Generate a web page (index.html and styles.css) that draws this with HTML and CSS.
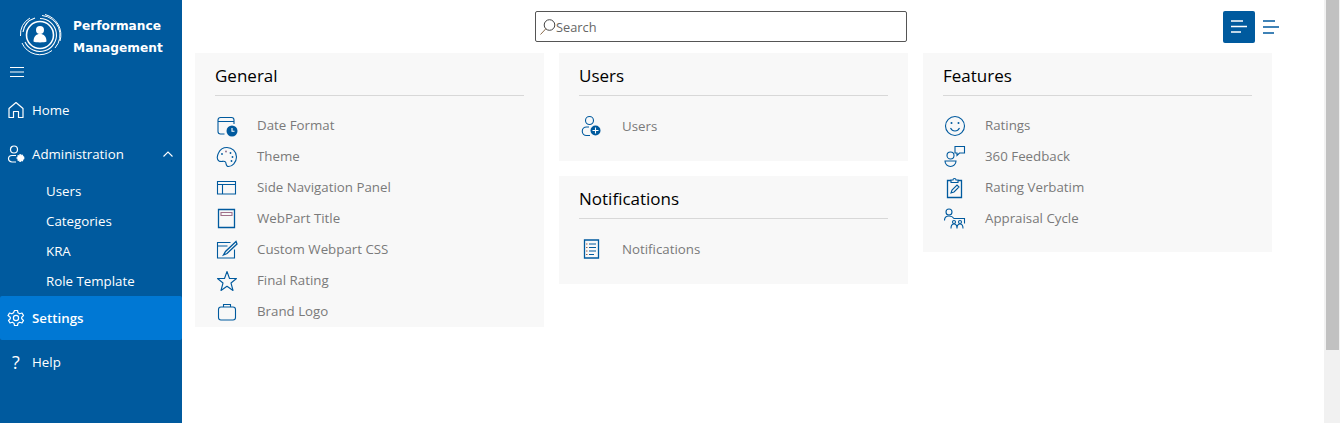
FILE: index.html
```html
<!DOCTYPE html>
<html lang="en">
<head>
  <meta charset="UTF-8">
  <title>Performance Management - Settings</title>
  <link rel="stylesheet" href="styles.css">
</head>
<body>
  <aside class="sidebar">
    <div class="brand">
      <svg class="brand-logo" width="44" height="44" viewBox="0 0 44 44" fill="none" stroke="#fff">
        <circle cx="22" cy="22" r="13.500" stroke-width="1.600"/>
        <path d="M22 5.500A16.500 16.500 0 1 1 7 29" stroke-width="1.100"/>
        <path d="M5 19A17.500 17.500 0 0 1 17 5" stroke-width="1.100"/>
        <path d="M24 2.500A19.500 19.500 0 0 1 37 35" stroke-width="1"/>
        <path d="M34 37.500A19.500 19.500 0 0 1 4 30" stroke-width="1"/>
        <path d="M2.500 23A19.500 19.500 0 0 1 12 5" stroke-width="1"/>
        <path d="M27 1.500A21 21 0 0 1 42 28" stroke-width="1"/>
        <circle cx="22" cy="17" r="4" fill="#fff" stroke="none"/>
        <path d="M15.500 28.500c0-5 2.500-7.500 6.500-7.500s6.500 2.500 6.500 7.500c-2 1.200-11 1.200-13 0z" fill="#fff" stroke="none"/>
      </svg>
      <div class="brand-name">Performance<br>Management</div>
    </div>
    <svg class="nav-toggle" width="16" height="12" viewBox="0 0 16 12" stroke="#fff" stroke-width="1.200">
      <path d="M1 1.500h14M1 6h14M1 10.500h14"/>
    </svg>
    <nav>
      <a class="nav-item">
        <svg class="nav-icon" width="18" height="18" viewBox="0 0 18 18" fill="none" stroke="#fff" stroke-width="1.200">
          <path d="M2 16.500V7.500L9 1.500l7 6v9h-4.500V10.500h-5v6z" stroke-linejoin="round"/>
        </svg>
        Home
      </a>
      <a class="nav-item">
        <svg class="nav-icon" width="18" height="18" viewBox="0 0 18 18" fill="none" stroke="#fff" stroke-width="1.200">
          <circle cx="7" cy="4.500" r="3.500"/>
          <path d="M9 10.500H5a3.500 3.250 0 0 0 0 6.500h4"/>
          <circle cx="13.500" cy="13" r="3" fill="#fff" stroke-dasharray="1.500 .6" stroke-width="1.800"/>
        </svg>
        Administration
        <svg class="nav-caret" width="12" height="8" viewBox="0 0 12 8" fill="none" stroke="#fff" stroke-width="1.100">
          <path d="M1.500 6.500 6 2l4.500 4.500"/>
        </svg>
      </a>
      <a class="sub-item">Users</a>
      <a class="sub-item">Categories</a>
      <a class="sub-item">KRA</a>
      <a class="sub-item">Role Template</a>
      <a class="nav-item active">
        <svg class="nav-icon" width="18" height="18" viewBox="0 0 18 18" fill="none" stroke="#fff" stroke-width="1.200">
          <path d="M7.500 1.500h3l.5 2.300 1.700 1 2.300-.8 1.500 2.600-1.800 1.600v1.600l1.800 1.600-1.500 2.600-2.300-.8-1.700 1-.5 2.300h-3l-.5-2.300-1.700-1-2.300.8-1.500-2.600 1.800-1.600V8.200L1 6.600l1.500-2.600 2.300.8 1.700-1z" stroke-linejoin="round"/>
          <circle cx="9" cy="9" r="2.600"/>
        </svg>
        Settings
      </a>
      <a class="nav-item">
        <span class="nav-icon help-mark">?</span>
        Help
      </a>
    </nav>
  </aside>

  <main class="content">
    <header class="topbar">
      <div class="search">
        <svg width="18" height="18" viewBox="0 0 18 18" fill="none" stroke="#444" stroke-width="1">
          <circle cx="10.500" cy="7" r="5.300"/>
          <path d="M6.800 10.800 1.500 16.500" stroke="#8a6a4a"/>
        </svg>
        <span>Search</span>
      </div>
      <div class="view-buttons">
        <button class="view-btn selected">
          <svg width="16" height="14" viewBox="0 0 16 14" stroke="#fff" stroke-width="1.300">
            <path d="M0 1h12M0 6.500h16M0 12h10"/>
          </svg>
        </button>
        <button class="view-btn">
          <svg width="16" height="14" viewBox="0 0 16 14" stroke="#005a9e" stroke-width="1.300">
            <path d="M0 1h12M0 7h16M0 13h11"/>
          </svg>
        </button>
      </div>
    </header>

    <div class="columns">
      <div class="column">
        <section class="card card-flush">
          <h3>General</h3>
          <ul>
            <li>
              <svg class="item-icon" width="22" height="22" viewBox="0 0 22 22" fill="none" stroke="#005a9e" stroke-width="1.100">
                <path d="M8.500 19H4.500A2.500 2.500 0 0 1 2 16.500V5a2.500 2.500 0 0 1 2.500-2.500h11A2.500 2.500 0 0 1 18 5v4M2 6.500h16"/>
                <circle cx="16" cy="16" r="5.500" fill="#005a9e" stroke="none"/>
                <path d="M16 13v3.300h2.500" stroke="#fff"/>
              </svg>
              Date Format
            </li>
            <li>
              <svg class="item-icon" width="22" height="22" viewBox="0 0 22 22" fill="none" stroke="#005a9e" stroke-width="1.100">
                <path d="M11 1.500c5 0 9.500 4 9.500 9.500S16 20.500 12.500 20.500c-3 0-2-3-3-4.500-1.500-2-4 .5-6.500-1C1 13.500 1 10 2.500 7 4 3.500 7.500 1.500 11 1.500z"/>
                <circle cx="10" cy="5.500" r=".9" fill="#8a6a8a" stroke="none"/>
                <circle cx="14.500" cy="7" r=".9" fill="#005a9e" stroke="none"/>
                <circle cx="16.500" cy="11" r=".9" fill="#005a9e" stroke="none"/>
                <circle cx="15.500" cy="15" r=".9" fill="#005a9e" stroke="none"/>
                <circle cx="6" cy="8" r=".9" fill="#005a9e" stroke="none"/>
              </svg>
              Theme
            </li>
            <li>
              <svg class="item-icon" width="22" height="22" viewBox="0 0 22 22" fill="none" stroke="#005a9e" stroke-width="1.100">
                <path d="M1.500 4.500h18v12.500h-18zM1.500 7.500h18M6.500 7.500V17"/>
              </svg>
              Side Navigation Panel
            </li>
            <li>
              <svg class="item-icon" width="22" height="22" viewBox="0 0 22 22" fill="none" stroke="#005a9e" stroke-width="1.100">
                <path d="M2.500 1.500h16v18h-16z" stroke-width="1.300"/>
                <path d="M5 4.500h11v3H5z" stroke="#a0708a"/>
              </svg>
              WebPart Title
            </li>
            <li>
              <svg class="item-icon" width="22" height="22" viewBox="0 0 22 22" fill="none" stroke="#005a9e" stroke-width="1.100">
                <path d="M18.500 10.500v8.500h-17V3.500h13M1.500 7h10"/>
                <path d="M20 2.500 9.500 12.500 7.500 16l3.500-1.500L21 5z" stroke-width="1.300"/>
              </svg>
              Custom Webpart CSS
            </li>
            <li>
              <svg class="item-icon" width="22" height="22" viewBox="0 0 22 22" fill="none" stroke="#005a9e" stroke-width="1.100">
                <path d="M11 1.500 13.500 8.500H20.500L15 13l2 7.500-6-4.300-6 4.300 2-7.500L1.500 8.500H8.500z" stroke-linejoin="round"/>
              </svg>
              Final Rating
            </li>
            <li>
              <svg class="item-icon" width="22" height="22" viewBox="0 0 22 22" fill="none" stroke="#005a9e" stroke-width="1.100">
                <rect x="2.500" y="6" width="17" height="13" rx="2.500"/>
                <path d="M7.500 6V3.500h7V6"/>
              </svg>
              Brand Logo
            </li>
          </ul>
        </section>
      </div>

      <div class="column">
        <section class="card">
          <h3>Users</h3>
          <ul>
            <li class="row-tall">
              <svg class="item-icon" width="22" height="22" viewBox="0 0 22 22" fill="none" stroke="#005a9e" stroke-width="1.100">
                <circle cx="9.500" cy="5.500" r="4"/>
                <path d="M9 12H6.500a4.200 4.200 0 0 0 0 8.500H10"/>
                <circle cx="15.500" cy="15.500" r="5" fill="#005a9e" stroke="none"/>
                <path d="M15.500 12.500v6M12.500 15.500h6" stroke="#fff"/>
              </svg>
              Users
            </li>
          </ul>
        </section>
        <section class="card">
          <h3>Notifications</h3>
          <ul>
            <li class="row-tall">
              <svg class="item-icon" width="22" height="22" viewBox="0 0 22 22" fill="none" stroke="#005a9e" stroke-width="1.100">
                <path d="M4.500 2h14v18h-14z" stroke-width="1.300"/>
                <path d="M9 6h7M9 9.500h7M9 13h7M9 16.500h5"/>
                <path d="M6 6h1.500M6 9.500h1.500M6 13h1.500M6 16.500h1.500" stroke="#a0604a"/>
              </svg>
              Notifications
            </li>
          </ul>
        </section>
      </div>

      <div class="column">
        <section class="card">
          <h3>Features</h3>
          <ul>
            <li>
              <svg class="item-icon" width="22" height="22" viewBox="0 0 22 22" fill="none" stroke="#005a9e" stroke-width="1.100">
                <circle cx="11" cy="11" r="9.500"/>
                <path d="M6.500 13c1 2 2.500 3 4.500 3s3.500-1 4.500-3"/>
                <circle cx="7.500" cy="8" r="1" fill="#005a9e" stroke="none"/>
                <circle cx="14.500" cy="8" r="1" fill="#005a9e" stroke="none"/>
              </svg>
              Ratings
            </li>
            <li>
              <svg class="item-icon" width="22" height="22" viewBox="0 0 22 22" fill="none" stroke="#005a9e" stroke-width="1.100">
                <circle cx="6.500" cy="9.500" r="3.500"/>
                <path d="M1 15h11a5.500 5.500 0 0 1-11 0z"/>
                <path d="M11 .5h9.500v6.500H15.500l-2.500 2.500V7H11z"/>
              </svg>
              360 Feedback
            </li>
            <li>
              <svg class="item-icon" width="22" height="22" viewBox="0 0 22 22" fill="none" stroke="#005a9e" stroke-width="1.100">
                <path d="M7 3.500H3.500v17h14v-17H14" stroke-width="1.300"/>
                <path d="M7 5.500V3h2a1.500 1.500 0 0 1 3 0h2v2.500z"/>
                <path d="M7 16l1-3 5-5 2 2-5 5z"/>
              </svg>
              Rating Verbatim
            </li>
            <li>
              <svg class="item-icon" width="22" height="22" viewBox="0 0 22 22" fill="none" stroke="#005a9e" stroke-width="1.100">
                <circle cx="5" cy="4" r="3"/>
                <path d="M.5 12.500C.5 9.500 2.500 8 5 8s4 1 5 2.500h10.500v5"/>
                <circle cx="10" cy="14" r="1.500"/>
                <circle cx="16" cy="14" r="1.500"/>
                <path d="M7 20.500c0-3 1-4.500 3-4.500s3 1.500 3 4.500M13 20.500c0-3 1-4.500 3-4.500s3 1.500 3 4.500"/>
              </svg>
              Appraisal Cycle
            </li>
          </ul>
        </section>
      </div>
    </div>
  </main>

  <div class="scrollbar"><div class="scroll-thumb"></div></div>
</body>
</html>
```

FILE: styles.css
```css
body {
  margin: 0;
  height: 423px;
  display: flex;
  overflow: hidden;
  background-color: #fff;
  font-family: "Open Sans", "Noto Sans", sans-serif;
}

.sidebar {
  width: 182px;
  flex-shrink: 0;
  background-color: #005a9e;
  color: #fff;
}
.brand {
  height: 64px;
  display: flex;
  align-items: center;
  padding-left: 18px;
  padding-top: 10px;
  box-sizing: border-box;
}
.brand-logo {
  margin-bottom: 4px;
}
.brand-name {
  margin-left: 11px;
  font-family: "DejaVu Sans", sans-serif;
  font-weight: bold;
  font-size: 12.200px;
  line-height: 22px;
}
.nav-toggle {
  display: block;
  margin-left: 9px;
  margin-top: 2px;
}
nav {
  margin-top: 10px;
}
.nav-item {
  height: 44px;
  display: flex;
  align-items: center;
  padding-left: 7px;
  font-size: 13.300px;
}
.nav-icon {
  width: 18px;
  margin-right: 7px;
  flex-shrink: 0;
}
.nav-caret {
  margin-left: auto;
  margin-right: 8px;
}
.help-mark {
  font-size: 18px;
  text-align: center;
}
.sub-item {
  height: 30px;
  display: flex;
  align-items: center;
  padding-left: 46px;
  font-size: 13.300px;
}
.active {
  background-color: #0078d4;
  font-weight: 600;
  border-radius: 2px;
}

.content {
  flex: 1;
  min-width: 0;
}
.topbar {
  height: 53px;
  display: flex;
  align-items: flex-start;
  padding-top: 11px;
  padding-left: 353px;
  box-sizing: border-box;
}
.search {
  width: 372px;
  height: 31px;
  box-sizing: border-box;
  border: 1px solid #555;
  border-radius: 2px;
  display: flex;
  align-items: center;
  padding-left: 3px;
  font-size: 12.800px;
  color: #666;
}
.search span {
  margin-left: -1px;
}
.view-buttons {
  margin-left: 316px;
  display: flex;
}
.view-btn {
  width: 32px;
  height: 32px;
  padding: 0;
  border: none;
  background: none;
  border-radius: 2px;
  display: flex;
  align-items: center;
  justify-content: center;
}
.selected {
  background-color: #005a9e;
}

.columns {
  display: grid;
  grid-template-columns: repeat(3, 349px);
  gap: 15px;
  padding-left: 13px;
}
.column {
  display: flex;
  flex-direction: column;
  gap: 15px;
}
.card {
  background-color: #f8f8f8;
  padding: 0 20px 18px;
}
.card-flush {
  padding-bottom: 0;
}
.card h3 {
  margin: 0;
  height: 43px;
  box-sizing: border-box;
  padding-top: 10px;
  font-size: 17px;
  line-height: 25px;
  font-weight: 400;
  color: #000;
  border-bottom: 1px solid #d8d8d8;
}
.card ul {
  list-style: none;
  margin: 14px 0 0;
  padding: 0;
}
.card li {
  height: 31px;
  display: flex;
  align-items: center;
  padding-bottom: 2px;
  box-sizing: border-box;
  font-size: 13.300px;
  color: #7a7a7a;
}
.card li.row-tall {
  height: 33px;
}
.item-icon {
  position: relative;
  top: 1px;
  margin-left: 1px;
  margin-right: 19px;
  flex-shrink: 0;
}
.row-tall .item-icon {
  top: 0;
  margin-right: 20px;
}

.scrollbar {
  width: 16px;
  flex-shrink: 0;
  background-color: #f1f1f1;
  padding-left: 2px;
  box-sizing: border-box;
}
.scroll-thumb {
  width: 13px;
  height: 350px;
  background-color: #c1c1c1;
}
```
